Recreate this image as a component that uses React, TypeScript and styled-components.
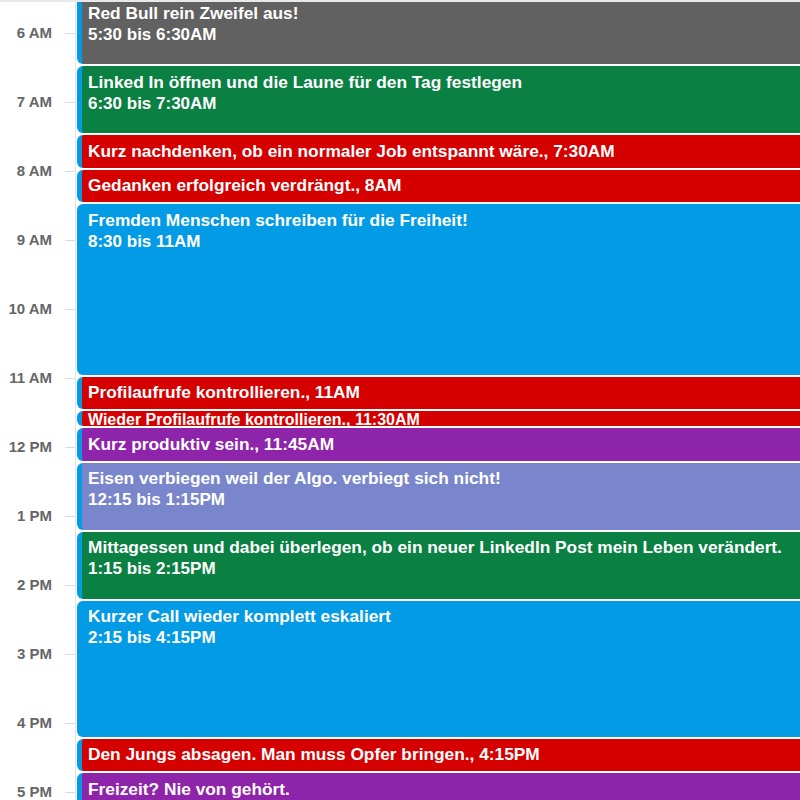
import styled, { createGlobalStyle } from 'styled-components';

const HOUR_PX = 69;
const MIN_PX = HOUR_PX / 60;
const DAY_START = 5 * 60; // grid starts at 5 AM, scrolled so 6 AM sits near the top
const GAP = 2;

const CALENDAR_BLUE = '#039be5';

const colors = {
  graphite: '#616161',
  basil: '#0b8043',
  tomato: '#d50000',
  peacock: '#039be5',
  grape: '#8e24aa',
  lavender: '#7986cb',
};

type CalEvent = {
  title: string;
  time?: string;
  start: number;
  end: number;
  color: string;
};

const t = (h: number, m = 0) => h * 60 + m;

const events: CalEvent[] = [
  { title: 'Red Bull rein Zweifel aus!', time: '5:30 bis 6:30AM', start: t(5, 30), end: t(6, 30), color: colors.graphite },
  { title: 'Linked In öffnen und die Laune für den Tag festlegen', time: '6:30 bis 7:30AM', start: t(6, 30), end: t(7, 30), color: colors.basil },
  { title: 'Kurz nachdenken, ob ein normaler Job entspannt wäre., 7:30AM', start: t(7, 30), end: t(8), color: colors.tomato },
  { title: 'Gedanken erfolgreich verdrängt., 8AM', start: t(8), end: t(8, 30), color: colors.tomato },
  { title: 'Fremden Menschen schreiben für die Freiheit!', time: '8:30 bis 11AM', start: t(8, 30), end: t(11), color: colors.peacock },
  { title: 'Profilaufrufe kontrollieren., 11AM', start: t(11), end: t(11, 30), color: colors.tomato },
  { title: 'Wieder Profilaufrufe kontrollieren., 11:30AM', start: t(11, 30), end: t(11, 45), color: colors.tomato },
  { title: 'Kurz produktiv sein., 11:45AM', start: t(11, 45), end: t(12, 15), color: colors.grape },
  { title: 'Eisen verbiegen weil der Algo. verbiegt sich nicht!', time: '12:15 bis 1:15PM', start: t(12, 15), end: t(13, 15), color: colors.lavender },
  { title: 'Mittagessen und dabei überlegen, ob ein neuer LinkedIn Post mein Leben verändert.', time: '1:15 bis 2:15PM', start: t(13, 15), end: t(14, 15), color: colors.basil },
  { title: 'Kurzer Call wieder komplett eskaliert', time: '2:15 bis 4:15PM', start: t(14, 15), end: t(16, 15), color: colors.peacock },
  { title: 'Den Jungs absagen. Man muss Opfer bringen., 4:15PM', start: t(16, 15), end: t(16, 45), color: colors.tomato },
  { title: 'Freizeit? Nie von gehört.', start: t(16, 45), end: t(17, 45), color: colors.grape },
];

const hours = [6, 7, 8, 9, 10, 11, 12, 13, 14, 15, 16, 17, 18];

const hourLabel = (h: number) => `${h % 12 === 0 ? 12 : h % 12} ${h < 12 ? 'AM' : 'PM'}`;

const GlobalStyle = createGlobalStyle`
  html, body {
    margin: 0;
    padding: 0;
    background: #fff;
  }
  body {
    font-family: "Liberation Sans", Arial, sans-serif;
    -webkit-font-smoothing: antialiased;
  }
`;

const Viewport = styled.div`
  height: 100vh;
  overflow: hidden;
  border-top: 2px solid #e9e9e9;
  box-sizing: border-box;
`;

const DayGrid = styled.div`
  display: grid;
  grid-template-columns: 75px 1fr;
  margin-top: -38px;
`;

const Gutter = styled.div`
  display: flex;
  flex-direction: column;
  padding-top: ${HOUR_PX - 8}px;
`;

const HourSlot = styled.div`
  height: ${HOUR_PX}px;
  flex-shrink: 0;
`;

const HourRow = styled.div`
  height: 16px;
  display: flex;
  align-items: center;
  justify-content: flex-end;
  gap: 13px;
`;

const HourLabel = styled.span`
  font-size: 15px;
  font-weight: 700;
  line-height: 16px;
  color: #666;
  white-space: nowrap;
`;

const Tick = styled.span`
  width: 10px;
  height: 1px;
  background: #dadce0;
`;

const Column = styled.div`
  display: flex;
  flex-direction: column;
  border-left: 1px solid #e3e3e3;
  padding-left: 1px;
  padding-top: ${(t(5, 30) - DAY_START) * MIN_PX - 1.5}px;
`;

const EventBlock = styled.div<{ $color: string; $compact: boolean }>`
  flex-shrink: 0;
  box-sizing: border-box;
  margin-bottom: ${GAP}px;
  background: ${(p) => p.$color};
  border-left: 5px solid ${CALENDAR_BLUE};
  border-radius: 6px 0 0 6px;
  padding: ${(p) => (p.$compact ? '0.5px 6px 0' : '5.5px 6px 0')};
  color: #fff;
  overflow: hidden;
  font-weight: 700;
  font-size: ${(p) => (p.$compact ? '15.7px' : '17px')};
  line-height: ${(p) => (p.$compact ? '15px' : '21px')};
`;

const Title = styled.div`
  font-size: 1.018em;
  white-space: nowrap;
`;

const Time = styled.div`
  white-space: nowrap;
`;

export default function App() {
  return (
    <>
      <GlobalStyle />
      <Viewport>
        <DayGrid>
          <Gutter>
            {hours.map((h) => (
              <HourSlot key={h}>
                <HourRow>
                  <HourLabel>{hourLabel(h)}</HourLabel>
                  <Tick />
                </HourRow>
              </HourSlot>
            ))}
          </Gutter>
          <Column>
            {events.map((ev) => {
              const minutes = ev.end - ev.start;
              return (
                <EventBlock
                  key={ev.title}
                  $color={ev.color}
                  $compact={minutes < 30}
                  style={{ height: minutes * MIN_PX - GAP }}
                >
                  <Title>{ev.title}</Title>
                  {ev.time && <Time>{ev.time}</Time>}
                </EventBlock>
              );
            })}
          </Column>
        </DayGrid>
      </Viewport>
    </>
  );
}
